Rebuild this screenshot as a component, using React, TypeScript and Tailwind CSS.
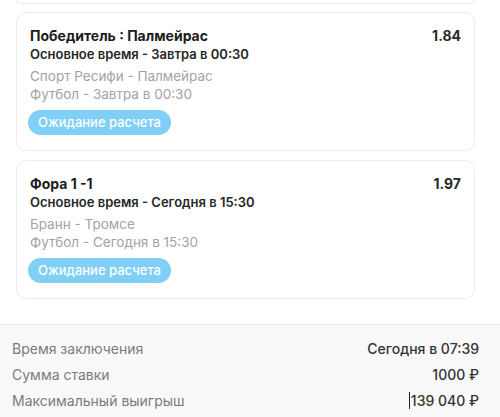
import React from "react";

interface Bet {
    title: string;
    period: string;
    odds: string;
    match: string;
    sport: string;
}

const bets: Bet[] = [
    {
        title: "Победитель : Палмейрас",
        period: "Основное время - Завтра в 00:30",
        odds: "1.84",
        match: "Спорт Ресифи - Палмейрас",
        sport: "Футбол - Завтра в 00:30",
    },
    {
        title: "Фора 1 -1",
        period: "Основное время - Сегодня в 15:30",
        odds: "1.97",
        match: "Бранн - Тромсе",
        sport: "Футбол - Сегодня в 15:30",
    },
];

function BetCard({ bet }: { bet: Bet }) {
    return (
        <div className="rounded-[10px] border border-[#ededed] bg-white px-[13px] pt-[14px] pb-[15px]">
            <div className="flex items-start justify-between">
                <div>
                    <p className="text-[14px] leading-[18px] font-bold text-[#1c1c1c]">{bet.title}</p>
                    <p className="text-[13px] leading-[18px] font-semibold text-[#262626]">{bet.period}</p>
                </div>
                <p className="text-[14px] leading-[18px] font-bold text-[#2a2a2a]">{bet.odds}</p>
            </div>
            <div className="mt-1">
                <p className="text-[13.5px] leading-[18px] text-[#a3a3a3]">{bet.match}</p>
                <p className="text-[13.5px] leading-[18px] text-[#a3a3a3]">{bet.sport}</p>
            </div>
            <span className="mt-[7px] -ml-[2px] inline-flex h-[25px] items-center rounded-full bg-[#7fcff6] px-[10px] text-[13px] font-medium text-white">
                Ожидание расчета
            </span>
        </div>
    );
}

function Row({ label, value, caret }: { label: string; value: string; caret?: boolean }) {
    return (
        <div className="flex h-[26px] items-center justify-between">
            <span className="text-[14px] text-[#7b7b7b]">{label}</span>
            <span className="flex items-center text-[14px] font-medium text-[#333333]">
                {caret && <span className="mr-[1px] h-[17px] w-px bg-[#222]" />}
                {value}
            </span>
        </div>
    );
}

export default function App() {
    return (
        <div className="w-[500px] h-[417px] overflow-hidden bg-white font-['Inter','Noto_Sans',sans-serif]">
            <div className="pl-4 pr-[25px]">
                <div className="h-[4px] rounded-b-[10px] border border-t-0 border-[#ededed]" />
                <div className="mt-[8px] flex flex-col gap-[9px]">
                    {bets.map((bet) => (
                        <BetCard key={bet.odds} bet={bet} />
                    ))}
                </div>
            </div>
            <div className="mt-[25px] border-t border-[#ececec] bg-[#f9f9f9] pl-[12px] pr-[21px] pt-[10px] pb-4">
                <Row label="Время заключения" value="Сегодня в 07:39" />
                <Row label="Сумма ставки" value="1000 ₽" />
                <Row label="Максимальный выигрыш" value="139 040 ₽" caret />
            </div>
        </div>
    );
}
